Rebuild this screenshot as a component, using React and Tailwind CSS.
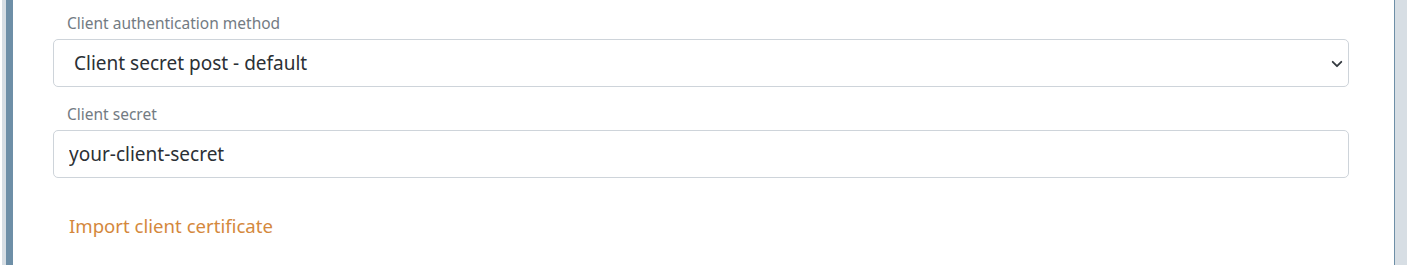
import React from "react";

const fontStack = { fontFamily: '"Noto Sans", "Open Sans", sans-serif' };

const Field = ({ label, children }) => (
  <div className="flex flex-col">
    <label className="pl-[14px] text-[15.5px] leading-[20px] text-[#737b83] mb-[6px]">
      {label}
    </label>
    {children}
  </div>
);

export default function App() {
  return (
    <div className="flex h-[265px] w-full bg-white" style={fontStack}>
      <div className="w-[2px] bg-white" />
      <div className="w-[4px] bg-[#d7dee4]" />
      <div className="flex-1 border-l-[7px] border-r border-l-[#6e8fa7] border-r-[#6e8fa7] bg-white pl-[40px] pr-[45px] pt-[13px]">
        <div className="flex flex-col gap-[17px]">
          <Field label="Client authentication method">
            <div className="relative">
              <select
                defaultValue="post"
                className="h-[48px] w-full appearance-none rounded-[5px] border border-[#ced4da] bg-white pl-[20px] text-[19px] text-[#2b3035] outline-none"
              >
                <option value="post">Client secret post - default</option>
                <option value="basic">Client secret basic</option>
                <option value="jwt">Client secret JWT</option>
              </select>
              <svg
                className="pointer-events-none absolute right-[6px] top-[20px]"
                width="12"
                height="10"
                viewBox="0 0 16 14"
              >
                <path
                  d="M2 4l6 6 6-6"
                  fill="none"
                  stroke="#343a40"
                  strokeWidth="2.6"
                  strokeLinecap="round"
                  strokeLinejoin="round"
                />
              </svg>
            </div>
          </Field>
          <Field label="Client secret">
            <input
              defaultValue="your-client-secret"
              className="h-[48px] w-full rounded-[5px] border border-[#ced4da] bg-white pl-[15px] text-[19px] text-[#2b3035] outline-none"
            />
          </Field>
        </div>
        <div className="mt-[35px] pl-[16px]">
          <a href="#" className="text-[18.6px] leading-[26px] text-[#d4883c]">
            Import client certificate
          </a>
        </div>
      </div>
      <div className="w-[12px] bg-[#d7dee4]" />
    </div>
  );
}
